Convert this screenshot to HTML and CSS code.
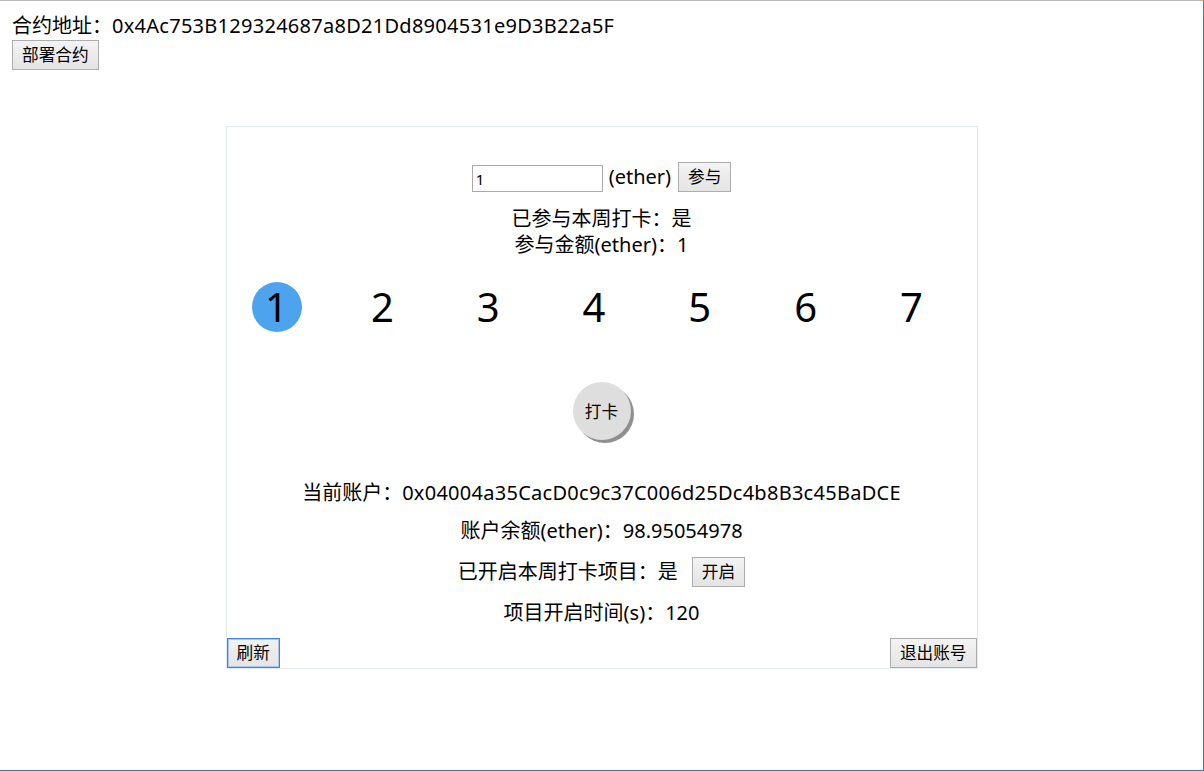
FILE: index.html
```html
<!DOCTYPE html>
<html lang="zh-CN">
<head>
<meta charset="utf-8">
<title>打卡</title>
<link rel="stylesheet" href="styles.css">
</head>
<body>
<div class="frame">
  <div class="header">
    <div class="addr">合约地址：<span class="hex">0x4Ac753B129324687a8D21Dd8904531e9D3B22a5F</span></div>
    <button class="btn">部署合约</button>
  </div>
  <div class="card">
    <div class="join-row">
      <input class="amount" type="text" value="1">
      <span class="unit">(ether)</span>
      <button class="btn">参与</button>
    </div>
    <div class="status">
      <div>已参与本周打卡：是</div>
      <div>参与金额(ether)：1</div>
    </div>
    <div class="days">
      <span class="day active">1</span>
      <span class="day">2</span>
      <span class="day">3</span>
      <span class="day">4</span>
      <span class="day">5</span>
      <span class="day">6</span>
      <span class="day">7</span>
    </div>
    <div class="punch-wrap">
      <button class="punch">打卡</button>
    </div>
    <div class="info">
      <div class="line">当前账户：<span class="hex">0x04004a35CacD0c9c37C006d25Dc4b8B3c45BaDCE</span></div>
      <div class="line">账户余额(ether)：98.95054978</div>
      <div class="line tall">已开启本周打卡项目：是<button class="btn open">开启</button></div>
      <div class="line">项目开启时间(s)：120</div>
    </div>
    <div class="footer">
      <button class="btn focus">刷新</button>
      <button class="btn">退出账号</button>
    </div>
  </div>
</div>
</body>
</html>
```

FILE: styles.css
```css
html, body {
  margin: 0;
  padding: 0;
  background: #ffffff;
}

body {
  font-family: "Noto Sans", "Noto Sans CJK SC", sans-serif;
  font-size: 20px;
  color: #000000;
}

.frame {
  box-sizing: border-box;
  height: 771px;
  border-top: 1px solid #b9b9b9;
  border-right: 1px solid #1a86d8;
  border-bottom: 1px solid #1a86d8;
}

.header {
  padding: 12px 12px 0;
}

.addr {
  line-height: 26px;
  height: 27px;
}

.hex {
  letter-spacing: 0.27px;
}

.btn {
  font-family: "Noto Sans", "Noto Sans CJK SC", sans-serif;
  font-size: 16.67px;
  height: 30px;
  padding: 0 9px;
  margin: 0;
  border: 1px solid #adadad;
  border-radius: 0;
  background: linear-gradient(#f3f3f3, #e4e4e4);
  color: #000000;
  line-height: 26px;
}

.btn.focus {
  border-color: #3d85e0;
  box-shadow: inset 0 0 0 1px #a9c7f0;
}

.card {
  box-sizing: border-box;
  width: 752px;
  margin: 56px auto 0;
  border: 1px solid #e2ebf3;
  padding-top: 35px;
}

.join-row {
  display: flex;
  justify-content: center;
  align-items: center;
  gap: 6px;
  height: 30px;
}

.amount {
  box-sizing: border-box;
  width: 131px;
  height: 27px;
  margin: 3px 0 0;
  padding: 0 3px;
  border: 1px solid #a9a9a9;
  font-family: "Noto Sans", "Noto Sans CJK SC", sans-serif;
  font-size: 15px;
  color: #000000;
}

.unit {
  line-height: 26px;
  margin-right: 1px;
}

.status {
  margin-top: 14px;
  text-align: center;
  line-height: 26px;
}

.days {
  margin-top: 24px;
  display: flex;
  justify-content: space-between;
  padding: 0 40px 0 25px;
}

.day {
  width: 50px;
  height: 50px;
  line-height: 50px;
  text-align: center;
  font-size: 40px;
  border-radius: 50%;
}

.day.active {
  background: #4ea3ee;
}

.punch-wrap {
  margin-top: 50px;
  display: flex;
  justify-content: center;
}

.punch {
  width: 58px;
  height: 58px;
  border: none;
  border-radius: 50%;
  padding: 0;
  background: #dedede;
  box-shadow: 3px 3px 0 #8f8f8f;
  font-family: "Noto Sans", "Noto Sans CJK SC", sans-serif;
  font-size: 16.67px;
  color: #000000;
}

.info {
  margin-top: 42px;
  display: flex;
  flex-direction: column;
  align-items: center;
  gap: 16px;
}

.line {
  display: flex;
  align-items: center;
  line-height: 22px;
  height: 22px;
}

.line.tall {
  height: 28px;
}

.btn.open {
  margin-left: 14px;
}

.footer {
  margin-top: 14px;
  display: flex;
  justify-content: space-between;
}
```
